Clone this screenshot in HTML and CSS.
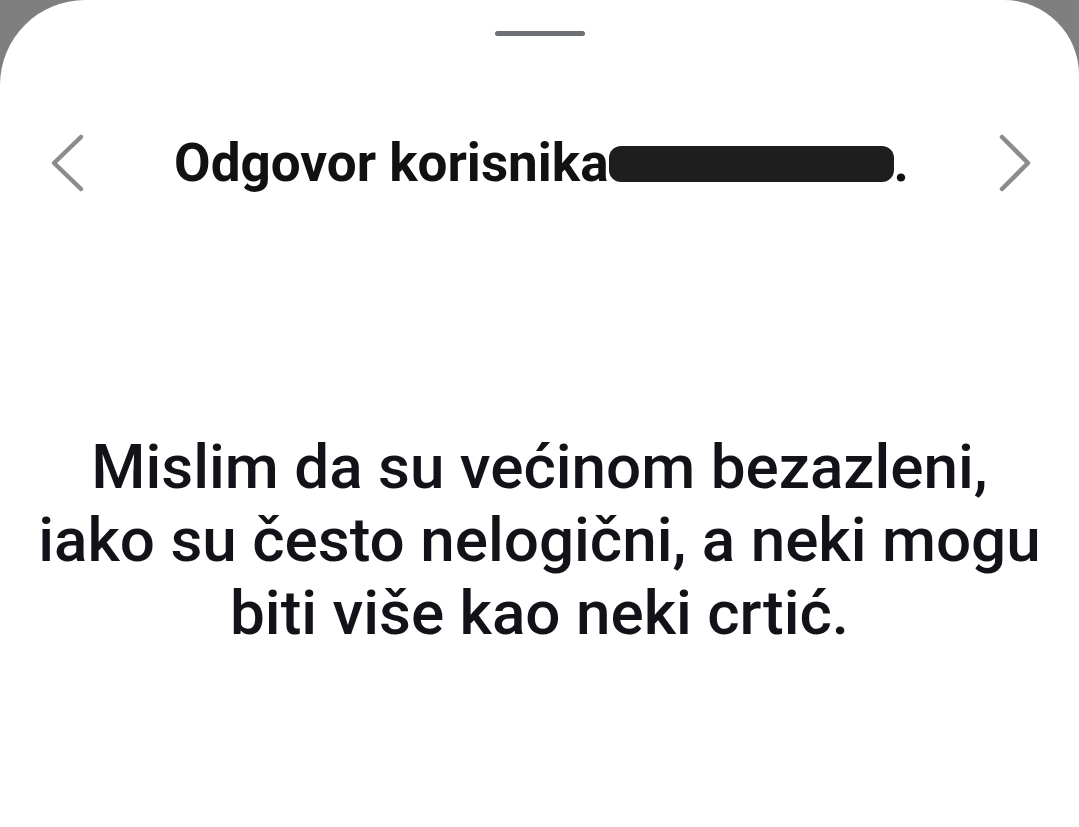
FILE: index.html
```html
<!DOCTYPE html>
<html>
<head>
    <meta charset="UTF-8">
    <title>Odgovor</title>
    <link rel="stylesheet" href="styles.css">
</head>
<body>
<div class="sheet">
    <div class="handle"></div>

    <div class="nav">
        <button class="chev" aria-label="Prethodni">
            <svg width="40" height="64" viewBox="0 0 40 64"><polyline points="33,6 6,32 33,58"/></svg>
        </button>
        <h1 class="title">Odgovor korisnika<span class="redacted"></span>.</h1>
        <button class="chev" aria-label="Sljedeći">
            <svg width="40" height="64" viewBox="0 0 40 64"><polyline points="7,6 33,32 7,58"/></svg>
        </button>
    </div>

    <div class="reply">
        <p>Mislim da su većinom bezazleni,<br>iako su često nelogični, a neki mogu<br>biti više kao neki crtić.</p>
    </div>
</div>
</body>
</html>
```

FILE: styles.css
```css
body {
    background-color: #7f7f7f;
    margin: 0;
    padding: 0;
    font-family: Roboto, "Noto Sans", sans-serif;
    color: #121318;
}

.sheet {
    background-color: #fff;
    border-radius: 85px 75px 0 0;
    min-height: 100vh;
    box-sizing: border-box;
    padding-top: 31px;
}

.handle {
    width: 90px;
    height: 5px;
    border-radius: 3px;
    background-color: #6c7075;
    margin: 0 auto;
}

.nav {
    display: flex;
    align-items: center;
    padding: 0 44px 0 48px;
    margin-top: 95px;
}

.chev {
    background: none;
    border: none;
    padding: 0;
    width: 40px;
    height: 64px;
    display: block;
}

.chev svg {
    display: block;
    fill: none;
    stroke: #8c8c8c;
    stroke-width: 4.5;
    stroke-linecap: round;
    stroke-linejoin: round;
}

.title {
    flex: 1;
    margin: 0;
    text-align: center;
    font-size: 53px;
    font-weight: 700;
    line-height: 64px;
    color: #111;
    white-space: nowrap;
}

.redacted {
    display: inline-block;
    width: 285px;
    height: 36px;
    background-color: #1e1e1e;
    border-radius: 12px;
    vertical-align: -1px;
}

.reply {
    padding: 0 20px;
    margin-top: 235px;
}

.reply p {
    margin: 0;
    text-align: center;
    font-size: 62px;
    font-weight: 500;
    line-height: 73px;
}
```
